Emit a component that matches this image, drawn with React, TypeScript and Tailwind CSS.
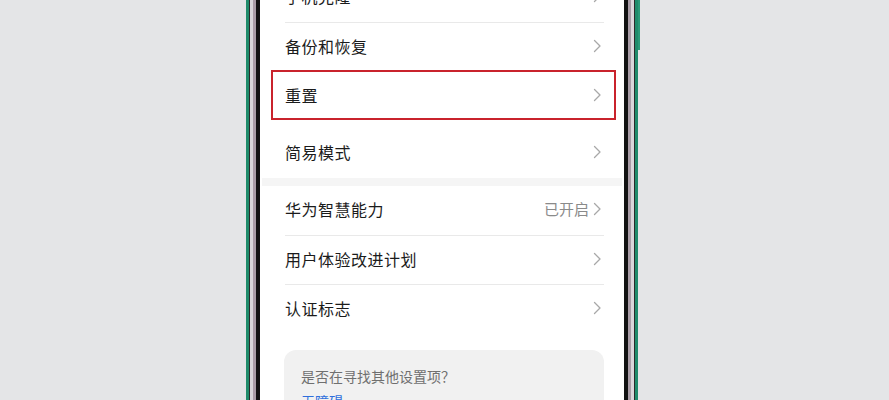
import React from "react";

const font = { fontFamily: '"Noto Sans CJK SC", "Noto Sans", sans-serif' };

function Chevron() {
  return (
    <svg width="9" height="14" viewBox="0 0 9 14" className="shrink-0">
      <polyline points="1.5,1.5 7,7 1.5,12.5" fill="none" stroke="#a8a8a8" strokeWidth="1.3" strokeLinecap="round" strokeLinejoin="round" />
    </svg>
  );
}

function Row({ label, value, h }: { label: string; value?: string; h: string }) {
  return (
    <div className={`flex items-center justify-between pl-[23px] pr-[20px] pb-[3px] ${h}`}>
      <span className="text-[16px] text-[#1b1b1b] tracking-[0.5px]">{label}</span>
      <div className="flex items-center gap-[4px]">
        {value && <span className="text-[15px] text-[#8a8a8a]">{value}</span>}
        <Chevron />
      </div>
    </div>
  );
}

function Divider() {
  return <div className="h-px bg-[#e9e9e9] ml-[23px] mr-[18px]" />;
}

export default function App() {
  return (
    <div className="w-full h-[400px] bg-[#e4e5e7] flex pl-[246px] overflow-hidden" style={font}>
      <div className="relative h-full border-x-[3px] border-[#1f8b6b]">
        {/* side button */}
        <div className="absolute right-[-5px] top-0 h-[50px] w-[2px] bg-[#2a9a78]" />
        <div className="h-full border-x border-[#2b2b2b]">
          <div className="h-full border-x-[3px] border-[#d9d6da]">
            <div className="h-full border-x-[3px] border-[#a99ca6]">
              <div className="h-full border-x-[4px] border-[#121212]">
                <div className="h-full border-x-2 border-white">
                  <div className="h-full w-[360px] bg-white overflow-hidden">
                    <div className="-mt-[28px] flex flex-col">
                      <Row label="手机克隆" h="h-[50px]" />
                      <Divider />
                      <Row label="备份和恢复" h="h-[49px]" />
                      <div className="relative">
                        <Row label="重置" h="h-[49px]" />
                        <div className="absolute left-[9px] right-[6px] top-[-2px] bottom-[1px] border-2 border-[#c9232c]" />
                      </div>
                      <div className="h-[7px]" />
                      <Row label="简易模式" h="h-[50px]" />
                      <div className="h-[8px] bg-[#f5f5f5]" />
                      <Row label="华为智慧能力" value="已开启" h="h-[49px]" />
                      <Divider />
                      <Row label="用户体验改进计划" h="h-[48px]" />
                      <Divider />
                      <Row label="认证标志" h="h-[49px]" />
                      <div className="h-[16px]" />
                      <div className="ml-[22px] mr-[18px] rounded-[12px] bg-[#f1f1f1] pl-[17px] pt-[16px] pb-[20px]">
                        <div className="text-[14px] text-[#6f6f6f] leading-[20px]">是否在寻找其他设置项？</div>
                        <div className="mt-[5px] text-[14px] text-[#2f6fdc] leading-[20px]">无障碍</div>
                      </div>
                    </div>
                  </div>
                </div>
              </div>
            </div>
          </div>
        </div>
      </div>
    </div>
  );
}
